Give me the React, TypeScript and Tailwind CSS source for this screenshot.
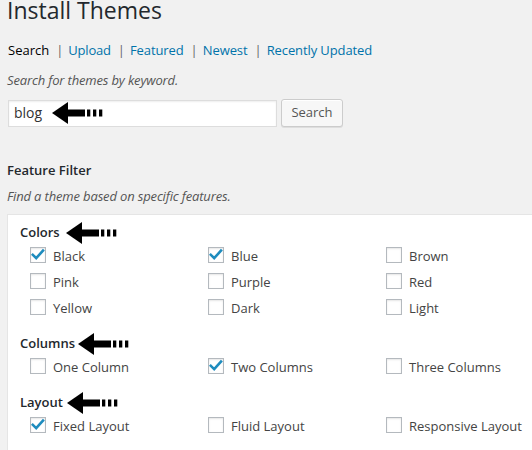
import React from "react";

const font = { fontFamily: '"Open Sans", "Liberation Sans", sans-serif' };

function Arrow() {
  return (
    <svg width="51" height="22" viewBox="0 0 51 22" className="shrink-0 block">
      <polygon points="0,11 16,0 16,22" fill="#000" />
      <rect x="15" y="7.5" width="18" height="7" fill="#000" />
      <rect x="35" y="7.5" width="3.3" height="7" fill="#000" />
      <rect x="41" y="7.5" width="3.3" height="7" fill="#000" />
      <rect x="47" y="7.5" width="3.3" height="7" fill="#000" />
    </svg>
  );
}

function Box({ checked }: { checked?: boolean }) {
  return (
    <span className="w-[16px] h-[16px] shrink-0 border border-[#b4b9be] bg-white shadow-[inset_0_1px_2px_rgba(0,0,0,0.1)] flex items-center justify-center">
      {checked && (
        <svg width="14" height="14" viewBox="0 0 14 14">
          <path d="M1.8 6.8 L5.2 10.2 L12 2.6" fill="none" stroke="#1e8cbe" strokeWidth="2.6" strokeLinecap="square" />
        </svg>
      )}
    </span>
  );
}

function Item({ label, checked }: { label: string; checked?: boolean }) {
  return (
    <div className="h-[26px] flex items-center">
      <Box checked={checked} />
      <span className="ml-[7px] text-[13px] text-[#444] leading-[18px] pt-[2px]">{label}</span>
    </div>
  );
}

function Heading({ text, gap }: { text: string; gap: string }) {
  return (
    <div className="h-[19px] flex items-center">
      <span className="text-[13px] font-semibold text-[#23282d] leading-[19px]">{text}</span>
      <span className={gap}>
        <Arrow />
      </span>
    </div>
  );
}

function Sep() {
  return <span className="ml-[7px] mr-[5px] text-[#666]">|</span>;
}

export default function App() {
  return (
    <div style={font} className="w-[532px] h-[450px] overflow-hidden bg-[#f1f1f1] pl-[7px] text-[#444]">
      <div className="-mt-[4px] h-[29px] leading-[29px] text-[23px] text-[#23282d] whitespace-nowrap">Install Themes</div>

      <div className="mt-[16px] h-[18px] leading-[18px] text-[13px] flex items-center whitespace-nowrap pl-[1px]">
        <span className="text-black">Search</span>
        <Sep />
        <span className="text-[#0073aa] tracking-[-0.2px]">Upload</span>
        <Sep />
        <span className="text-[#0073aa] tracking-[-0.1px]">Featured</span>
        <Sep />
        <span className="text-[#0073aa] tracking-[-0.1px]">Newest</span>
        <Sep />
        <span className="text-[#0073aa] tracking-[-0.1px]">Recently Updated</span>
      </div>

      <div className="mt-[12px] h-[18px] leading-[18px] text-[13px] italic text-[#555] tracking-[-0.15px]">Search for themes by keyword.</div>

      <div className="mt-[10px] flex items-center">
        <div className="ml-[1px] w-[269px] h-[27px] bg-white border border-[#ddd] shadow-[inset_0_1px_2px_rgba(0,0,0,0.07)] flex items-center pl-[5px]">
          <span className="text-[14px] text-[#333] leading-[18px]">blog</span>
          <span className="ml-[10px]">
            <Arrow />
          </span>
        </div>
        <div className="ml-[4px] w-[62px] h-[28px] rounded-[3px] border border-[#ccc] bg-[#f7f7f7] shadow-[inset_0_1px_0_#fff,0_1px_0_rgba(0,0,0,0.08)] flex items-center justify-center text-[13px] text-[#555]">
          Search
        </div>
      </div>

      <div className="mt-[34px] h-[19px] leading-[19px] text-[13px] font-semibold text-[#23282d]">Feature Filter</div>
      <div className="mt-[7px] h-[18px] leading-[18px] text-[13px] italic text-[#555] tracking-[-0.15px]">Find a theme based on specific features.</div>

      <div className="mt-[9px] w-[560px] h-[300px] bg-white border border-[#e5e5e5] pt-[8px] pl-[12px]">
        <Heading text="Colors" gap="ml-[6px]" />
        <div className="ml-[10px] grid grid-cols-[178px_178px_178px]">
          <Item label="Black" checked />
          <Item label="Blue" checked />
          <Item label="Brown" />
          <Item label="Pink" />
          <Item label="Purple" />
          <Item label="Red" />
          <Item label="Yellow" />
          <Item label="Dark" />
          <Item label="Light" />
        </div>

        <div className="mt-[14px]">
          <Heading text="Columns" gap="ml-[3px]" />
        </div>
        <div className="ml-[10px] grid grid-cols-[178px_178px_178px]">
          <Item label="One Column" />
          <Item label="Two Columns" checked />
          <Item label="Three Columns" />
        </div>

        <div className="mt-[14px]">
          <Heading text="Layout" gap="ml-[4px]" />
        </div>
        <div className="ml-[10px] grid grid-cols-[178px_178px_178px]">
          <Item label="Fixed Layout" checked />
          <Item label="Fluid Layout" />
          <Item label="Responsive Layout" />
        </div>
      </div>
    </div>
  );
}
